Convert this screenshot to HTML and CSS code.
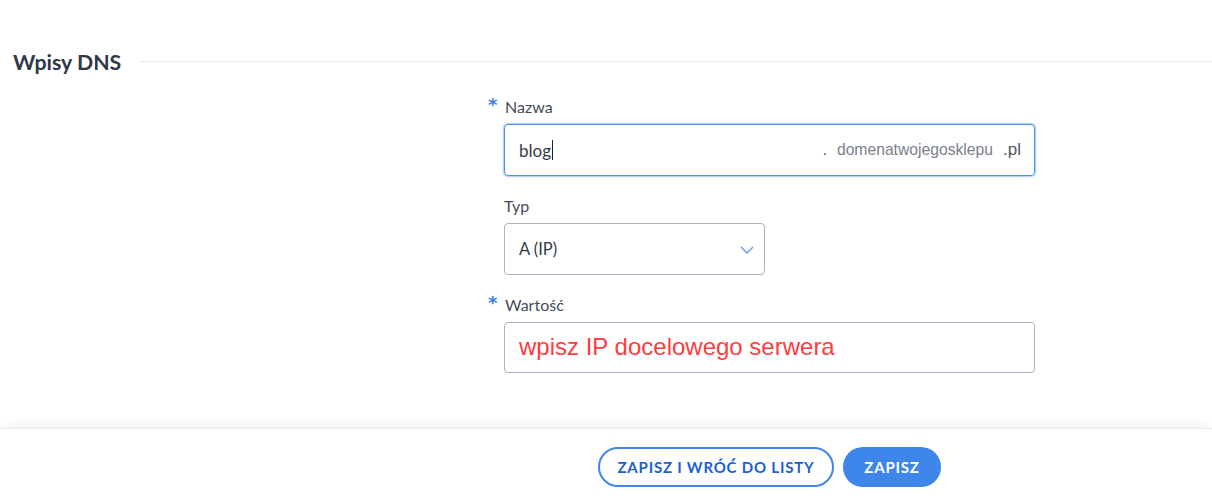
FILE: index.html
```html
<!DOCTYPE html>
<html lang="pl">
<head>
<meta charset="utf-8">
<title>Wpisy DNS</title>
<link rel="stylesheet" href="styles.css">
</head>
<body>
<main class="page">
  <div class="section-head">
    <h2 class="section-title">Wpisy DNS</h2>
    <div class="section-line"></div>
  </div>

  <form class="form">
    <div class="field">
      <label class="label"><span class="req">*</span>Nazwa</label>
      <div class="input input-focus">
        <span class="value">blog</span><span class="caret"></span>
        <span class="suffix"><span class="dot">.</span><span class="domain">domenatwojegosklepu</span><span class="tld">.pl</span></span>
      </div>
    </div>

    <div class="field">
      <label class="label">Typ</label>
      <div class="input select">
        <span class="value">A (IP)</span>
        <svg class="chevron" width="14" height="8" viewBox="0 0 14 8"><path d="M1 1 L7 7 L13 1" fill="none" stroke="#5b9cf0" stroke-width="1.4"/></svg>
      </div>
    </div>

    <div class="field">
      <label class="label"><span class="req">*</span>Wartość</label>
      <div class="input">
        <span class="hint">wpisz IP docelowego serwera</span>
      </div>
    </div>
  </form>
</main>

<footer class="footer">
  <button class="btn btn-outline" type="button">ZAPISZ I WRÓĆ DO LISTY</button>
  <button class="btn btn-primary" type="button">ZAPISZ</button>
</footer>
</body>
</html>
```

FILE: styles.css
```css
* { box-sizing: border-box; }

html, body {
  margin: 0;
  padding: 0;
  background: #ffffff;
  font-family: Lato, "Noto Sans", sans-serif;
  color: #3d4453;
}

.page {
  padding-top: 49px;
  height: 428px;
}

.section-head {
  display: flex;
  align-items: center;
  padding-left: 13px;
  gap: 19px;
}

.section-title {
  margin: 0;
  font-size: 21.3px;
  line-height: 26px;
  font-weight: 700;
  color: #2f3846;
}

.section-line {
  flex: 1;
  height: 1px;
  background: #e9eaec;
  margin-top: -1px;
}

.form {
  padding-left: 504px;
  padding-top: 21px;
  display: flex;
  flex-direction: column;
}

.field {
  display: flex;
  flex-direction: column;
  margin-bottom: 19px;
}

.label {
  font-size: 16px;
  line-height: 22px;
  color: #454b58;
  margin-bottom: 6px;
  display: flex;
  align-items: flex-start;
}

.req {
  color: #3b82e8;
  width: 10px;
  margin-left: -16px;
  margin-right: 7px;
  font-family: "DejaVu Sans", sans-serif;
  font-size: 18px;
  line-height: 20px;
  font-weight: 700;
  margin-top: -1px;
}

.input {
  width: 531px;
  height: 52px;
  border: 1px solid #aab3c5;
  border-radius: 4px;
  display: flex;
  align-items: center;
  padding: 0 13px 0 14px;
  font-size: 16px;
  color: #333a47;
}

.input-focus {
  border-color: #4d8fea;
  box-shadow: 0 0 0 1px rgba(77, 143, 234, 0.25), 0 0 3px rgba(77, 143, 234, 0.5);
}

.value {
  font-size: 17px;
}

.caret {
  width: 1px;
  height: 20px;
  background: #222;
  margin-left: 1px;
}

.suffix {
  margin-left: auto;
  display: flex;
  align-items: baseline;
  font-family: "Liberation Sans", Arial, sans-serif;
}

.dot {
  font-size: 16px;
  color: #555b66;
  margin-right: 10px;
}

.domain {
  font-size: 15.7px;
  color: #7b7f8c;
  margin-right: 10px;
}

.tld {
  font-size: 17px;
  color: #50565f;
}

.select {
  width: 261px;
  justify-content: space-between;
  padding-right: 10px;
}

.select .value {
  font-size: 16.5px;
}

.chevron {
  margin-top: 2px;
}

.hint {
  font-family: "Liberation Sans", Arial, sans-serif;
  font-size: 24px;
  color: #fd3d3f;
  margin-top: -2px;
}

.field:last-child .input {
  height: 51px;
}

.footer {
  border-top: 1px solid #ededed;
  box-shadow: 0 -8px 10px -4px rgba(0, 0, 0, 0.05);
  height: 68px;
  display: flex;
  align-items: flex-start;
  gap: 9px;
  padding-left: 598px;
  padding-top: 18px;
}

.btn {
  height: 40px;
  border-radius: 20px;
  font-family: Lato, "Noto Sans", sans-serif;
  font-size: 15px;
  font-weight: 700;
  letter-spacing: 0.8px;
  cursor: pointer;
  padding: 0;
}

.btn-outline {
  width: 236px;
  background: #fff;
  border: 2px solid #3f86ea;
  color: #1c5fcf;
}

.btn-primary {
  width: 98px;
  background: #3f86ea;
  border: none;
  color: #ffffff;
}
```
